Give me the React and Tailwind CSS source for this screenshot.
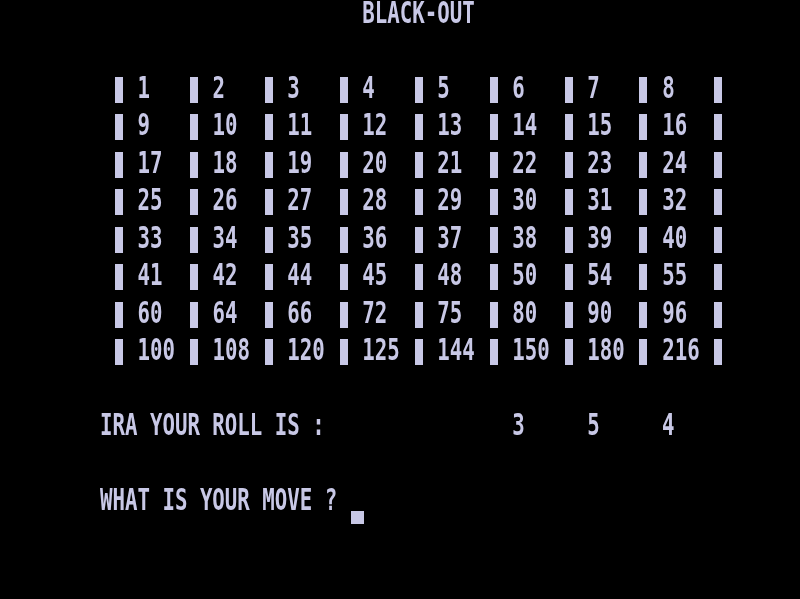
import React from "react";

const nums = [
  [1, 2, 3, 4, 5, 6, 7, 8],
  [9, 10, 11, 12, 13, 14, 15, 16],
  [17, 18, 19, 20, 21, 22, 23, 24],
  [25, 26, 27, 28, 29, 30, 31, 32],
  [33, 34, 35, 36, 37, 38, 39, 40],
  [41, 42, 44, 45, 48, 50, 54, 55],
  [60, 64, 66, 72, 75, 80, 90, 96],
  [100, 108, 120, 125, 144, 150, 180, 216],
];

function gridLine(row) {
  let s = " ".repeat(9);
  row.forEach((n) => {
    s += "| " + String(n).padEnd(4, " ");
  });
  s += "|";
  return s;
}

function pad(s, col) {
  return s.padEnd(col, " ");
}

const lines = [];
lines.push(pad("", 29) + "BLACK-OUT");
lines.push("");
nums.forEach((r) => lines.push(gridLine(r)));
lines.push("");
let roll = pad("        IRA YOUR ROLL IS :", 41) + "3";
roll = pad(roll, 47) + "5";
roll = pad(roll, 53) + "4";
lines.push(roll);
lines.push("");
lines.push("        WHAT IS YOUR MOVE ? ^");
lines.push("");
lines.push("");

function Text({ children }) {
  return (
    <span className="block whitespace-pre text-[20.76px] leading-[0.9] font-bold origin-top scale-y-[1.45] text-[#c8c8e6] [font-family:'DejaVu_Sans_Mono',monospace]">
      {children}
    </span>
  );
}

function Bar() {
  return (
    <span className="flex w-[12.5px] shrink-0 justify-center">
      <span className="block shrink-0 w-[8px] h-[26px] mt-[2px] bg-[#c8c8e6]" />
    </span>
  );
}

function Cursor() {
  return (
    <span className="flex w-[12.5px] shrink-0">
      <span className="block shrink-0 ml-[1px] w-[13px] h-[13px] mt-[24px] bg-[#c8c8e6]" />
    </span>
  );
}

function Line({ text }) {
  const parts = [];
  let buf = "";
  let key = 0;
  for (const ch of text) {
    if (ch === "|" || ch === "^") {
      if (buf) parts.push(<Text key={key++}>{buf}</Text>);
      buf = "";
      parts.push(ch === "|" ? <Bar key={key++} /> : <Cursor key={key++} />);
    } else {
      buf += ch;
    }
  }
  if (buf) parts.push(<Text key={key++}>{buf}</Text>);
  return <div className="flex items-start h-[37.44px]">{parts}</div>;
}

export default function App() {
  return (
    <div className="w-[800px] h-[599px] bg-black overflow-hidden blur-[0.4px]">
      {lines.map((l, i) => (
        <Line key={i} text={l} />
      ))}
    </div>
  );
}
